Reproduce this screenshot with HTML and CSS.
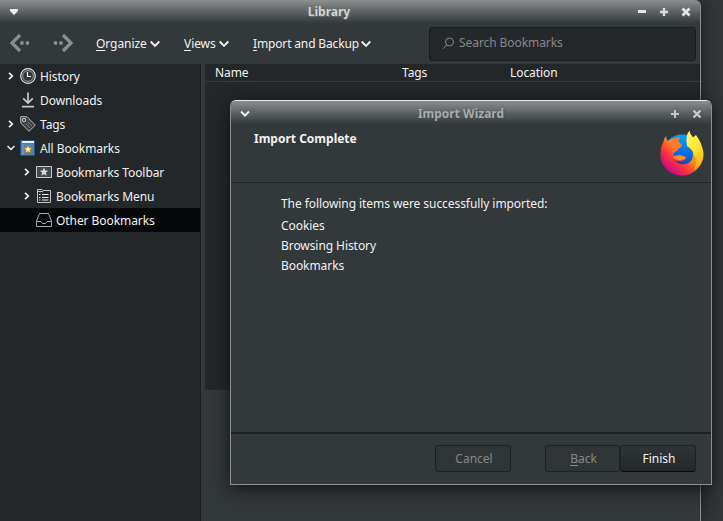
FILE: index.html
```html
<!DOCTYPE html>
<html lang="en">
<head>
<meta charset="utf-8">
<title>Library</title>
<link rel="stylesheet" href="styles.css">
</head>
<body>
<svg class="defs" width="0" height="0">
  <defs>
    <symbol id="right" viewBox="0 0 8 8"><path d="M2 .8 5.3 4 2 7.2" fill="none" stroke="#f1f1f1" stroke-width="1.7"/></symbol>
    <symbol id="down" viewBox="0 0 10 8"><path d="M.7 1.5 5 5.8 9.3 1.5" fill="none" stroke="#f1f1f1" stroke-width="1.9"/></symbol>
  </defs>
</svg>
<main class="library">
  <header class="titlebar">
    <svg class="menu-mark" width="10" height="8"><path d="M1 1H9V3L5 7 1 3Z" fill="#eee"/></svg>
    <h1 class="title">Library</h1>
    <div class="controls">
      <svg width="10" height="10"><path d="M1 4.5H9" stroke="#e5e5e5" stroke-width="3"/></svg>
      <svg width="10" height="10"><path d="M1 5H9M5 1V9" stroke="#ddd" stroke-width="2.4"/></svg>
      <svg width="10" height="10"><path d="M1.5 1.5 8.5 8.5M8.5 1.5 1.5 8.5" stroke="#e5e5e5" stroke-width="2.8"/></svg>
    </div>
  </header>
  <nav class="toolbar">
    <svg class="nav-arrow" width="22" height="20"><path d="M11 2 3 10 11 18" fill="none" stroke="#8b8e8f" stroke-width="3.2"/><circle cx="13" cy="10" r="1.9" fill="#8b8e8f"/><circle cx="18.5" cy="10" r="1.9" fill="#8b8e8f"/></svg>
    <svg class="nav-arrow forward" width="22" height="20"><path d="M11 2 19 10 11 18" fill="none" stroke="#8b8e8f" stroke-width="3.2"/><circle cx="9" cy="10" r="1.9" fill="#8b8e8f"/><circle cx="3.5" cy="10" r="1.9" fill="#8b8e8f"/></svg>
    <span class="menu organize"><span><u>O</u>rganize</span><svg width="10" height="8"><use href="#down"/></svg></span>
    <span class="menu views"><span><u>V</u>iews</span><svg width="10" height="8"><use href="#down"/></svg></span>
    <span class="menu backup"><span><u>I</u>mport and Backup</span><svg width="10" height="8"><use href="#down"/></svg></span>
    <div class="search"><svg width="13" height="13" fill="none" stroke="#85898a"><circle cx="7.5" cy="5" r="4"/><path d="M4.8 7.8 1 11.7"/></svg><span>Search Bookmarks</span></div>
  </nav>
  <div class="content">
    <aside class="sidebar">
      <div class="row"><svg class="twisty" width="8" height="8"><use href="#right"/></svg>
        <svg class="icon" width="16" height="16" fill="none"><circle cx="8" cy="8" r="7.3" stroke="#e1e1e1" stroke-width="1.2"/><circle cx="8" cy="8" r="5.4" stroke="#a2a4a5" fill="#33373a"/><path d="M7.5 4V8.5H11" stroke="#fff" stroke-width="1.2"/></svg><span>History</span></div>
      <div class="row"><i class="twisty"></i>
        <svg class="icon" width="16" height="16" fill="none" stroke="#c7c8c8" stroke-width="1.7"><path d="M8 .5V11M3.2 6.3 8 11 12.8 6.3M2 14.7H14"/></svg><span>Downloads</span></div>
      <div class="row"><svg class="twisty" width="8" height="8"><use href="#right"/></svg>
        <svg class="icon" width="16" height="16"><path d="M.7.7H7L15.3 9.2 9 15.3.7 7Z" fill="#414548" stroke="#b4b6b7"/><circle cx="4" cy="4" r="1.7" fill="none" stroke="#ccc"/><path d="M6 8 10 12M8 6 12 10" stroke="#74787a"/></svg><span>Tags</span></div>
      <div class="row"><svg class="twisty open" width="8" height="8"><use href="#down"/></svg>
        <svg class="icon" width="16" height="16"><path d="M.5.5H14.5V15.5H.5Z" fill="#547fae" stroke="#24508c"/><path d="M2 2H14" stroke="#f2f2f2" stroke-width="2"/><path d="M3 4V15" stroke="#83a9cf"/><path d="M8 5 9.3 7.8 12.3 8.2 10 10.2 10.6 13 8 11.7 5.4 13 6 10.2 3.7 8.2 6.7 7.8Z" fill="#fff3a0" stroke="#b08713"/></svg><span>All Bookmarks</span></div>
      <div class="row child"><svg class="twisty" width="8" height="8"><use href="#right"/></svg>
        <svg class="icon" width="16" height="16"><path d="M.5 2.5H15.5V13.5H.5Z" fill="#454a4d" stroke="#c7c9c9"/><path d="M8 3.6 9.2 6.5 12.2 6.7 9.8 8.6 10.6 11.7 8 10 5.4 11.7 6.2 8.6 3.8 6.7 6.8 6.5Z" fill="#ddd"/></svg><span>Bookmarks Toolbar</span></div>
      <div class="row child"><svg class="twisty" width="8" height="8"><use href="#right"/></svg>
        <svg class="icon" width="16" height="16" fill="none" stroke="#c4c6c6"><path d="M1.5 14.5V1.5H6L7 2.5H14.5V14.5Z"/><path d="M1.5 3.5H7"/><path d="M3 6.5H4.5M6 6.5H12.5M3 9.5H4.5M6 9.5H12.5M3 12H4.5M6 12H12.5" stroke="#eee"/></svg><span>Bookmarks Menu</span></div>
      <div class="row child selected"><i class="twisty"></i>
        <svg class="icon" width="16" height="16" fill="none" stroke="#aaadad"><path d="M3.5 1.5H12.5L15.5 9V14.5H.5V9Z"/><path d="M.5 9.5H5L6.5 11.5H9.5L11 9.5H15.5"/></svg><span>Other Bookmarks</span></div>
    </aside>
    <section class="list"><div class="columns"><span>Name</span><span>Tags</span><span>Location</span></div></section>
  </div>
</main>
<section class="wizard">
  <header class="titlebar wizard-title">
    <svg class="menu-mark" width="10" height="8"><path d="M1 1.5 5 5.5 9 1.5" fill="none" stroke="#eee" stroke-width="2"/></svg>
    <h2 class="title">Import Wizard</h2>
    <div class="controls">
      <svg width="10" height="10"><path d="M1 5H9M5 1V9" stroke="#c4c6c6" stroke-width="2"/></svg>
      <svg width="10" height="10"><path d="M1.5 1.5 8.5 8.5M8.5 1.5 1.5 8.5" stroke="#ccc" stroke-width="2.2"/></svg>
    </div>
  </header>
  <div class="banner"><h3>Import Complete</h3>
    <svg class="firefox" width="44" height="46" viewBox="0 0 44 46">
      <defs>
        <linearGradient id="body" x1=".85" y1=".1" x2=".15" y2=".85"><stop offset="0" stop-color="#fff13f"/><stop offset=".25" stop-color="#ffb413"/><stop offset=".5" stop-color="#ff7a24"/><stop offset=".72" stop-color="#ff3040"/><stop offset="1" stop-color="#c70b85"/></linearGradient>
        <linearGradient id="globe" x1=".6" y1="0" x2=".4" y2="1"><stop offset="0" stop-color="#00a5ff"/><stop offset=".5" stop-color="#0869df"/><stop offset="1" stop-color="#33217d"/></linearGradient>
        <linearGradient id="tail" x1=".3" y1="0" x2=".6" y2="1"><stop offset="0" stop-color="#fff36a"/><stop offset=".5" stop-color="#ffe52f"/><stop offset="1" stop-color="#ffad00"/></linearGradient>
      </defs>
      <circle cx="22" cy="24" r="19.5" fill="url(#globe)"/>
      <path d="M6 6Q6 9 8 11Q11 8 18 8L16 13 22 15 21 17Q17 19 16 21Q13 23 13 25Q15 27 18 26Q23 25 26 28Q25 30 22 31Q17 32 14 29Q18 36 26 34Q33 32 33 24Q33 17 27 12L36 5Q42 13 43.5 23C44 35 34 45.5 22 45.5C10 45.5.5 36 .5 25Q.5 16 3.5 12Q4 8 6 6Z" fill="url(#body)"/>
      <path d="M29.5.5Q30 5 35 9Q44 15 43 28Q41 36 34 40Q38 31 34 24Q32 19 27 16Q25 6 29.5.5Z" fill="url(#tail)"/>
      <path d="M12 10Q15 7 20 7L18.5 11 22 15 20.5 17Q17 18 17.5 21Q14 21 13 23Q11 16 12 10Z" fill="#ff7a28"/>
      <path d="M14 26Q18 25 22 25.5L26 27Q24 30 20 30Q16 30 13 28Z" fill="#ff8f24"/>
    </svg>
  </div>
  <div class="result"><p class="lead">The following items were successfully imported:</p><p>Cookies</p><p>Browsing History</p><p>Bookmarks</p></div>
  <footer class="actions"><button class="button cancel" disabled>Cancel</button><button class="button back" disabled><u>B</u>ack</button><button class="button finish">Finish</button></footer>
</section>
</body>
</html>
```
FILE: styles.css
```css
* { box-sizing: border-box; }
body { margin: 0; width: 723px; height: 521px; overflow: hidden; position: relative; background: #33373a; color: #f1f1f1; font: 12px/16px "Noto Sans", sans-serif; letter-spacing: -0.07px; }
.defs { position: absolute; }
svg { display: block; flex: none; }
h1, h2, h3, p { margin: 0; font-size: inherit; }
u { text-decoration: underline; text-underline-offset: 2px; }
.library { width: 701px; height: 521px; display: flex; flex-direction: column; border-right: 1px solid #8d8f90; border-radius: 0 6px 0 0; background: #33383a; box-shadow: 0 0 20px #17191b; }
.titlebar { height: 24px; flex: none; display: grid; grid-template-columns: 64px 1fr 64px; align-items: center; background: linear-gradient(#8b8f90, #606566 45%, #34393b 95%); border-radius: 0 5px 0 0; }
.menu-mark { margin: 0 0 0 9px; }
.title { text-align: center; font-weight: bold; line-height: 18px; color: #d2d4d4; text-shadow: 1px 1px 0 #666a6b; letter-spacing: 0; }
.library .title { padding-right: 42px; }
.controls { display: flex; gap: 12px; justify-content: flex-end; padding-right: 9px; }
.toolbar { height: 40px; flex: none; display: flex; align-items: center; padding: 0 4px 0 9px; }
.nav-arrow { margin-top: -2px; }
.forward { margin-left: 21px; }
.menu { display: flex; align-items: center; gap: 3px; }
.menu svg { margin-top: -1px; }
.organize { width: 88px; margin-left: 22px; }
.views { width: 69px; }
.backup { gap: 2px; letter-spacing: -0.15px; }
.search { width: 267px; height: 34px; margin-left: auto; display: flex; align-items: center; gap: 4px; padding: 0 12px 2px; background: #25282b; border: 1px solid #1a1d1f; border-radius: 3px; color: #85898a; }
.content { display: flex; flex: 1; }
.sidebar { width: 201px; background: #232729; border-right: 1px solid #1a1d1f; }
.row { width: 200px; height: 24px; display: flex; align-items: center; padding-left: 7px; }
.row span { padding-top: 2px; }
.child { padding-left: 23px; }
.twisty { width: 8px; flex: none; margin-right: 5px; }
.icon { margin-right: 4px; }
.selected { background: #070809; }
.list { width: 495px; height: 326px; margin-left: auto; background: #232729; }
.columns { height: 18px; display: grid; grid-template-columns: 187px 108px 1fr; padding: 1px 0 0 10px; border-bottom: 1px solid #373a3d; }
.wizard { position: absolute; left: 230px; top: 100px; width: 482px; height: 385px; display: flex; flex-direction: column; border: 1px solid #8e9090; border-top-color: #e8e8e8; border-radius: 6px 6px 0 0; background: #33383a; box-shadow: 0 4px 18px #111416; }
.wizard-title { border-radius: 5px 5px 0 0; }
.wizard-title .title { padding: 2px 20px 0 0; color: #a9acac; text-shadow: 1px 1px 0 #454a4b; }
.wizard-title .controls, .wizard-title .menu-mark { margin-top: 2px; }
.banner { height: 58px; display: flex; justify-content: space-between; padding: 5px 7px 0 23px; border-bottom: 1px solid #212426; }
.banner h3 { padding-top: 1px; letter-spacing: 0; }
.result { padding: 13px 0 0 50px; flex: 1; }
.result p { height: 20px; }
.result .lead { height: 22px; }
.actions { height: 52px; display: flex; justify-content: flex-end; padding: 11px 15px 0; border-top: 2px solid #1d2021; }
.button { width: 76px; height: 27px; padding: 0 0 0 2px; border: 1px solid #1e2223; border-radius: 3px; background: #303538; color: #85898a; font: inherit; letter-spacing: 0; }
.cancel { margin-right: 34px; }
.back { width: 75px; }
.finish { color: #f1f1f1; background: linear-gradient(#303538, #232729); border-bottom-color: #090b0b; }
```
